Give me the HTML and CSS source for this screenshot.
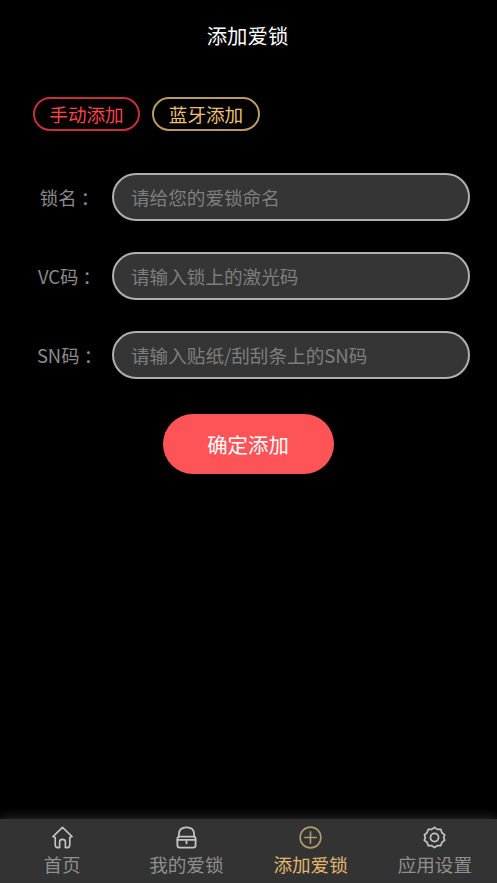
FILE: index.html
```html
<!DOCTYPE html>
<html lang="zh-CN">
  <head>
    <title>添加爱锁</title>
    <meta charset="utf-8" />
    <link rel="stylesheet" href="styles.css">
  </head>
  <body>
    <div class="page">
      <h1 class="title">添加爱锁</h1>

      <div class="mode-tabs">
        <span class="mode-tab mode-tab-active">手动添加</span>
        <span class="mode-tab">蓝牙添加</span>
      </div>

      <form class="lock-form">
        <div class="form-row">
          <label class="form-label" for="lock-name">锁名 ：</label>
          <input class="form-input" id="lock-name" type="text" placeholder="请给您的爱锁命名" />
        </div>
        <div class="form-row">
          <label class="form-label" for="lock-vc">VC码 ：</label>
          <input class="form-input" id="lock-vc" type="text" placeholder="请输入锁上的激光码" />
        </div>
        <div class="form-row">
          <label class="form-label" for="lock-sn">SN码 ：</label>
          <input class="form-input" id="lock-sn" type="text" placeholder="请输入贴纸/刮刮条上的SN码" />
        </div>
        <button class="submit-btn" type="button">确定添加</button>
      </form>

      <nav class="tab-bar">
        <a class="tab-item">
          <svg class="tab-icon" viewBox="0 0 24 24" fill="none" stroke="#c4c4c4" stroke-width="1.7" stroke-linejoin="round" stroke-linecap="round">
            <path d="M12 1.5 L22 11 L19.6 12 V19.5 Q19.6 22.5 17 22.5 H15 V16.5 Q15 14 12 14 Q9 14 9 16.5 V22.5 H7 Q4.4 22.5 4.4 19.5 V12 L2 11 Z" />
          </svg>
          <span>首页</span>
        </a>
        <a class="tab-item">
          <svg class="tab-icon" viewBox="0 0 24 24" fill="none" stroke="#c4c4c4" stroke-width="1.9" stroke-linejoin="round" stroke-linecap="round">
            <path d="M4 11 V9 Q4 1.5 12 1.5 Q20 1.5 20 9 V11" />
            <rect x="2.5" y="11" width="19" height="11.5" rx="2.5" />
            <path d="M2.5 14.5 H21.5" />
            <path d="M12 15.5 V18" />
          </svg>
          <span>我的爱锁</span>
        </a>
        <a class="tab-item tab-item-active">
          <svg class="tab-icon" viewBox="0 0 24 24" fill="none" stroke="#b09a6c" stroke-width="1.7" stroke-linecap="round">
            <circle cx="12" cy="12" r="10.8" />
            <path d="M12 6 V18 M6 12 H18" />
          </svg>
          <span>添加爱锁</span>
        </a>
        <a class="tab-item">
          <svg class="tab-icon" viewBox="0 0 24 24" fill="none" stroke="#c4c4c4" stroke-width="1.8" stroke-linejoin="round">
            <path d="M12 1.5 L15 3.5 L18.6 3.6 L19.8 7 L22.6 9.2 L21.6 12 L22.6 15 L19.8 17 L18.6 20.4 L15 20.5 L12 22.5 L9 20.5 L5.4 20.4 L4.2 17 L1.4 15 L2.4 12 L1.4 9.2 L4.2 7 L5.4 3.6 L9 3.5 Z" />
            <circle cx="12" cy="12" r="4.2" />
          </svg>
          <span>应用设置</span>
        </a>
      </nav>
    </div>
  </body>
</html>
```

FILE: styles.css
```css
* {
  box-sizing: border-box;
}

html,
body {
  margin: 0;
  background-color: #000;
}

body {
  font-family: "Noto Sans CJK SC", "Open Sans", sans-serif;
}

.page {
  height: 883px;
  display: flex;
  flex-direction: column;
  overflow: hidden;
}

.title {
  margin: 0;
  padding-top: 21px;
  padding-right: 2px;
  height: 97px;
  font-size: 20.4px;
  line-height: 28px;
  font-weight: 400;
  text-align: center;
  color: #fff;
}

.mode-tabs {
  display: flex;
  gap: 12px;
  padding-left: 33px;
}

.mode-tab {
  width: 108px;
  height: 34px;
  display: flex;
  align-items: center;
  justify-content: center;
  padding-bottom: 1px;
  border: 2px solid #b89b62;
  border-radius: 17px;
  font-size: 18.6px;
  color: #ecc074;
}

.mode-tab-active {
  width: 107px;
  border-color: #c7303a;
  color: #fb434b;
}

.lock-form {
  display: flex;
  flex-direction: column;
  gap: 31px;
  padding-top: 42px;
}

.form-row {
  display: flex;
  align-items: center;
  padding-left: 22px;
}

.form-label {
  width: 90px;
  padding-left: 5px;
  padding-bottom: 1px;
  text-align: center;
  font-size: 18.4px;
  color: #8b8b8b;
  white-space: nowrap;
}

.form-input {
  width: 358px;
  height: 48px;
  padding: 0 17px 2px;
  border: 2px solid #b0b0b0;
  border-radius: 24px;
  background-color: #353535;
  font-family: inherit;
  font-size: 18.6px;
  color: #fff;
  outline: none;
}

.form-input::placeholder {
  color: #7e7e7e;
  opacity: 1;
}

.submit-btn {
  align-self: center;
  width: 171px;
  height: 60px;
  margin-top: 4px;
  padding: 0 1px 0 0;
  border: none;
  border-radius: 30px;
  background-color: #fe5457;
  font-family: inherit;
  font-size: 20.4px;
  color: #fff;
}

.tab-bar {
  margin-top: auto;
  height: 64px;
  display: flex;
  background-color: #333;
  box-shadow: 0 -2px 10px rgba(90, 90, 90, 0.45);
}

.tab-item {
  flex: 1;
  display: flex;
  flex-direction: column;
  align-items: center;
  padding-top: 7px;
  font-size: 18.6px;
  line-height: 26px;
  color: #8f8f8f;
}

.tab-item-active {
  color: #e2b76d;
}

.tab-icon {
  width: 23px;
  height: 23px;
  margin-bottom: 2px;
}
```
